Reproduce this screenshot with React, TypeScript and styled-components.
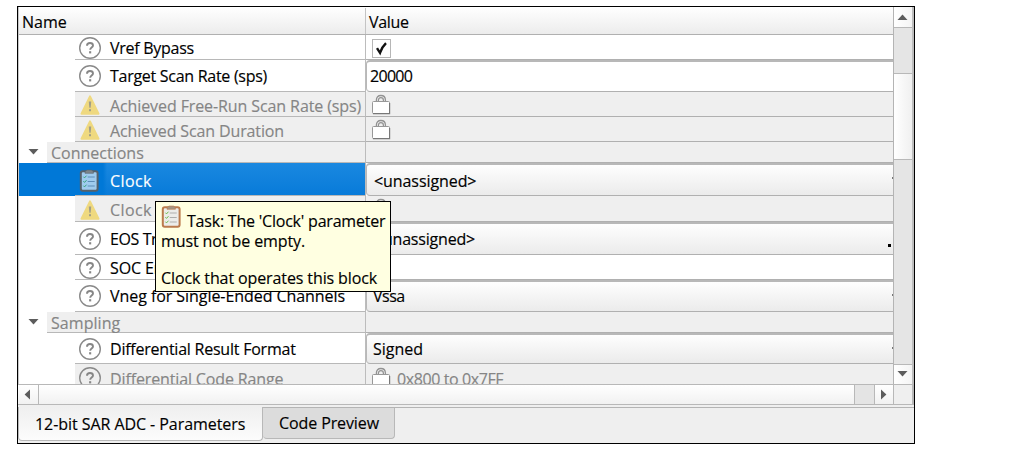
import React from 'react';
import styled, { createGlobalStyle, css } from 'styled-components';

const GlobalStyle = createGlobalStyle`
  * { box-sizing: border-box; }
  body { margin: 0; background: #fff; }
`;

const Page = styled.main`
  padding: 6px 0 0 17px;
  font: 400 16px/20px "Open Sans", "Noto Sans", sans-serif;
  color: #000;
`;

const Window = styled.section`
  position: relative;
  width: 898px;
  height: 438px;
  border: 1px solid #000;
  background: #efefef;
  display: flex;
  flex-direction: column;
  overflow: hidden;
`;

const Text = styled.span<{ $spacing?: number }>`
  white-space: nowrap;
  letter-spacing: ${p => p.$spacing ?? 0}px;
  -webkit-text-stroke: 0.15px currentColor;
`;

const Body = styled.div`
  display: flex;
  height: 377px;
`;

const Table = styled.div`
  flex: 1;
  height: 377px;
  overflow: hidden;
  background: #fff;
  border-left: 1px solid #c8c8c8;
`;

const Header = styled.div`
  display: flex;
  height: 28px;
  padding-top: 1px;
  background: linear-gradient(#fff, #ececec);
  border-bottom: 1px solid #b0b0b0;
`;

const HeadCell = styled.div<{ $first?: boolean }>`
  width: ${p => (p.$first ? '347px' : 'auto')};
  flex: ${p => (p.$first ? 'none' : 1)};
  padding: 4px 0 0 3px;
  border-right: ${p => (p.$first ? '1px solid #c4c4c4' : 'none')};
`;

type Tone = 'normal' | 'locked' | 'selected';

const RowBox = styled.div<{ $h: number }>`
  display: flex;
  height: ${p => p.$h}px;
`;

const Gutter = styled.div<{ $w: number; $tone: Tone }>`
  width: ${p => p.$w}px;
  flex: none;
  display: flex;
  align-items: center;
  padding: 0 0 2px 9px;
  background: ${p => (p.$tone === 'selected' ? '#0078d7' : '#fff')};
`;

const NameCell = styled.div<{ $tone: Tone; $top: number; $group: boolean }>`
  flex: 1;
  display: flex;
  align-items: center;
  padding: ${p => p.$top}px 0 0 ${p => (p.$group ? 4 : 3)}px;
  border-right: 1px solid #bcbcbc;
  border-bottom: 1px solid #b8b8b8;
  background: ${p =>
    p.$tone === 'selected'
      ? 'linear-gradient(90deg, #0078d7 28px, transparent 32px), linear-gradient(#1a88e0, #087bd9)'
      : p.$tone === 'locked' ? '#efefef' : '#fff'};
  color: ${p => (p.$tone === 'selected' ? '#fff' : p.$tone === 'locked' ? '#858585' : '#000')};
`;

const NameSide = styled.div`
  width: 347px;
  flex: none;
  display: flex;
`;

const IconSlot = styled.span<{ $w: number; $raise?: boolean; $inset?: number }>`
  width: ${p => p.$w}px;
  flex: none;
  display: flex;
  padding-left: ${p => p.$inset ?? 0}px;
  padding-bottom: ${p => (p.$raise ? 2 : 0)}px;
`;

const ValueCell = styled.div<{ $kind: 'plain' | 'locked' | 'input' | 'combo'; $pad: number; $top: number }>`
  flex: 1;
  position: relative;
  display: flex;
  align-items: center;
  padding: ${p => p.$top}px 0 0 ${p => p.$pad}px;
  border-bottom: 1px solid #b0b0b0;
  background: ${p => (p.$kind === 'locked' ? '#efefef' : p.$kind === 'combo' ? 'linear-gradient(#fefefe, #ebebeb)' : '#fff')};
  color: ${p => (p.$kind === 'locked' ? '#858585' : '#000')};
  ${p =>
    (p.$kind === 'input' || p.$kind === 'combo') &&
    css`
      border-top: 2px solid #b8b8b8;
      border-left: 1px solid #b8b8b8;
      border-radius: 4px 0 0 4px;
      padding-top: ${Math.max(0, p.$top - 2)}px;
      padding-bottom: ${Math.max(0, 2 - p.$top)}px;
    `}
`;

const ArrowTip = styled.i<{ $dot?: boolean }>`
  position: absolute;
  right: ${p => (p.$dot ? 2 : 0)}px;
  top: ${p => (p.$dot ? 20 : 12)}px;
  width: ${p => (p.$dot ? 3 : 1)}px;
  height: ${p => (p.$dot ? 3 : 2)}px;
  background: ${p => (p.$dot ? '#000' : '#777')};
`;

const CheckBox = styled.span`
  width: 19px;
  height: 19px;
  border: 1px solid #b6b6b6;
  background: #fff;
  display: grid;
  place-items: center;
`;

const ScrollColumn = styled.div`
  width: 21px;
  height: 377px;
  display: flex;
  flex-direction: column;
  border-left: 1px solid #b4b4b4;
  border-right: 2px solid #bdbdbd;
  background: #e5e5e5;
`;

const VButton = styled.div<{ $bottom?: boolean }>`
  height: ${p => (p.$bottom ? 20 : 21)}px;
  display: grid;
  place-items: center;
  padding-right: 1px;
  padding-bottom: ${p => (p.$bottom ? 2 : 0)}px;
  background: linear-gradient(90deg, #fff, #f4f4f4);
  border-top: ${p => (p.$bottom ? '1px solid #b8b8b8' : 'none')};
  border-bottom: ${p => (p.$bottom ? 'none' : '1px solid #b8b8b8')};
`;

const VTrack = styled.div`
  flex: 1;
  padding-top: 45px;
`;

const VThumb = styled.div`
  height: 87px;
  background: linear-gradient(90deg, #fff, #f0f0f0);
  border: solid #b8b8b8;
  border-width: 1px 0;
`;

const HScroll = styled.div`
  height: 21px;
  display: flex;
  border: solid #b8b8b8;
  border-width: 1px 0;
  background: #e4e4e4;
`;

const HPart = styled.div<{ $w?: number; $side?: 'left' | 'right' }>`
  width: ${p => (p.$w ? `${p.$w}px` : 'auto')};
  flex: ${p => (p.$w ? 'none' : 1)};
  display: grid;
  place-items: center;
  background: linear-gradient(#fff, #f1f1f1);
  border-right: ${p => (p.$side === 'right' ? 'none' : '1px solid #b8b8b8')};
  border-left: ${p => (p.$side === 'right' ? '1px solid #b8b8b8' : 'none')};
  padding-right: ${p => (p.$side ? 2 : 0)}px;
`;

const HTrack = styled.div`
  width: 19px;
  background: #e4e4e4;
`;

const Corner = styled.div`
  width: 21px;
  background: #efefef;
  border: solid #b8b8b8;
  border-width: 0 2px 0 1px;
`;

const Tabs = styled.div`
  flex: 1;
  margin-top: 2px;
  border-top: 1px solid #b4b4b4;
  display: flex;
  align-items: flex-start;
`;

const Tab = styled.div<{ $active?: boolean }>`
  width: ${p => (p.$active ? 245 : 132)}px;
  height: ${p => (p.$active ? 34 : 31)}px;
  margin-top: ${p => (p.$active ? '-1px' : 0)};
  padding: ${p => (p.$active ? '7px 0 0 16px' : '5px 0 0 16px')};
  border: 1px solid #b8b8b8;
  border-top: none;
  border-left-width: ${p => (p.$active ? 1 : 0)}px;
  border-radius: 0 0 4px 4px;
  background: ${p => (p.$active ? 'linear-gradient(#efefef, #fcfcfc)' : '#dcdcdc')};
`;

const Tooltip = styled.aside`
  position: absolute;
  left: 137px;
  top: 194px;
  width: 236px;
  height: 91px;
  padding: 4px 0 0 5px;
  border: 1px solid #000;
  background: #ffffe1;
  display: flex;
  flex-direction: column;
`;

const TipLine = styled.div<{ $gap?: number; $first?: boolean }>`
  display: flex;
  align-items: flex-end;
  height: ${p => (p.$first ? 25 : 20)}px;
  margin-top: ${p => p.$gap ?? 0}px;
  gap: 6px;
  & > svg { margin-bottom: 3px; }
`;

const HelpIcon = () => (
  <svg width="24" height="24" viewBox="0 0 24 24" fill="none">
    <circle cx="12" cy="12" r="10.3" stroke="#8a8a8a" strokeWidth="1.4" />
    <path d="M9 9.8C9 7.8 10.1 7 12 7s3 .9 3 2.5c0 2.1-2.8 2.1-2.8 4.3" stroke="#868686" strokeWidth="1.9" />
    <rect x="11.1" y="15.2" width="2.1" height="2.2" fill="#868686" />
  </svg>
);

const WarnIcon = () => (
  <svg width="24" height="22" viewBox="0 0 24 22">
    <path d="M12 2.4 20.5 19.8H3.5Z" fill="#efd980" stroke="#efd980" strokeWidth="2" strokeLinejoin="round" />
    <path d="M10.8 7.5h2.4l-.5 6.3h-1.4z" fill="#a29e88" />
    <rect x="11" y="15.2" width="2" height="2" fill="#a29e88" />
  </svg>
);

const TaskIcon = ({ selected }: { selected?: boolean }) => {
  const frame = selected ? '#56616b' : '#bb7a4d';
  const paper = selected ? '#9fcbee' : '#ececea';
  const lines = selected ? '#5d8db8' : '#adadad';
  const tick = selected ? '#35a277' : '#69bb4b';
  return (
    <svg width="20" height="23" viewBox="0 0 20 23">
      <rect x="1.8" y="2.3" width="16.8" height="19.4" rx="2" fill={paper} stroke={frame} strokeWidth="2" />
      <path d="M6 4.3V2.6L8 1h4.4l2 1.6v1.7z" fill={selected ? '#7c858b' : '#a59483'} stroke={frame} strokeWidth=".6" />
      <path d="M8.7 8h7M8.7 12.5h7M8.7 17h7" stroke={lines} strokeWidth="1.2" />
      <path d="m4.4 7.7 1.1 1.2 2-2.2M4.4 12.2l1.1 1.2 2-2.2M4.4 16.7l1.1 1.2 2-2.2" fill="none" stroke={tick} strokeWidth="1" />
    </svg>
  );
};

const LockIcon = () => (
  <svg width="20" height="22" viewBox="0 0 20 22" fill="none">
    <path d="M5.4 8V6C5.4 3 7 1.5 9.9 1.5S14.4 3 14.4 6v2" stroke="#929292" strokeWidth="1.3" />
    <path d="M7.4 8V6.2c0-1.7.8-2.5 2.5-2.5s2.5.8 2.5 2.5V8" stroke="#929292" strokeWidth="1.2" />
    <rect x="1.5" y="7.5" width="17" height="12" rx="1" fill="#fff" stroke="#989898" />
    <path d="M2 19.7h16.6V9" stroke="#787878" strokeWidth="1.2" />
  </svg>
);

const CheckMark = () => (
  <svg width="15" height="15" viewBox="0 0 15 15" fill="none">
    <path d="M3 7.2 6 11.8Q8 6 12 2.2" stroke="#111" strokeWidth="2.4" />
  </svg>
);

const rotations = { down: 0, left: 90, up: 180, right: 270 };
const Triangle = ({ dir }: { dir: keyof typeof rotations }) => (
  <svg width="11" height="11" viewBox="0 0 11 11">
    <path d="M.5 3h10l-5 5.4z" fill="#5c5c5c" transform={`rotate(${rotations[dir]} 5.5 5.5)`} />
  </svg>
);

type Item = {
  h: number;
  label: string;
  ls?: number;
  icon?: 'help' | 'warn' | 'task';
  tone?: Tone;
  kind?: 'plain' | 'locked' | 'input' | 'combo';
  value?: string;
  vls?: number;
  pad?: number;
  top?: number;
  tip?: 'arrow' | 'dot';
  check?: boolean;
};

const items: Item[] = [
  { h: 25, label: 'Vref Bypass', ls: -0.27, icon: 'help', check: true, pad: 6 },
  { h: 32, label: 'Target Scan Rate (sps)', ls: -0.28, icon: 'help', kind: 'input', value: '20000', vls: -0.7, pad: 3, top: 0 },
  { h: 25, label: 'Achieved Free-Run Scan Rate (sps)', ls: -0.1, icon: 'warn', tone: 'locked', kind: 'locked', pad: 5, top: 4 },
  { h: 25, label: 'Achieved Scan Duration', ls: -0.13, icon: 'warn', tone: 'locked', kind: 'locked', pad: 5, top: 4 },
  { h: 21, label: 'Connections' },
  { h: 33, label: 'Clock', ls: 0.4, icon: 'task', tone: 'selected', kind: 'combo', value: '<unassigned>', vls: -0.08, pad: 7, top: 4, tip: 'arrow' },
  { h: 26, label: 'Clock', ls: 0.4, icon: 'warn', tone: 'locked', kind: 'locked', pad: 5 },
  { h: 33, label: 'EOS Trigger', ls: -0.4, icon: 'help', kind: 'combo', value: '<unassigned>', vls: -0.2, pad: 7, tip: 'dot' },
  { h: 25, label: 'SOC Enable', ls: -0.1, icon: 'help' },
  { h: 32, label: 'Vneg for Single-Ended Channels', ls: -0.06, icon: 'help', kind: 'combo', value: 'Vssa', vls: -0.5, pad: 6, top: 0, tip: 'arrow' },
  { h: 21, label: 'Sampling', ls: 0.05 },
  { h: 31, label: 'Differential Result Format', ls: -0.23, icon: 'help', kind: 'combo', value: 'Signed', pad: 6, tip: 'arrow' },
  { h: 27, label: 'Differential Code Range', ls: -0.13, icon: 'help', tone: 'locked', kind: 'locked', value: '0x800 to 0x7FF', vls: -0.4, pad: 5, top: 4 },
];

function Row({ item }: { item: Item }) {
  const group = !item.icon;
  const tone: Tone = group ? 'locked' : item.tone ?? 'normal';
  const kind = group ? 'locked' : item.kind ?? 'plain';
  const top = item.top ?? 2;
  return (
    <RowBox $h={item.h}>
      <NameSide>
        <Gutter $w={group ? 28 : 56} $tone={tone}>{group && <Triangle dir="down" />}</Gutter>
        <NameCell $tone={tone} $top={top} $group={group}>
          {item.icon && (
            <IconSlot $w={32} $raise={top === 4} $inset={item.icon === 'task' ? 1 : 0}>
              {item.icon === 'help' && <HelpIcon />}
              {item.icon === 'warn' && <WarnIcon />}
              {item.icon === 'task' && <TaskIcon selected />}
            </IconSlot>
          )}
          <Text $spacing={item.ls}>{item.label}</Text>
        </NameCell>
      </NameSide>
      <ValueCell $kind={kind} $pad={item.pad ?? 0} $top={top}>
        {item.check && <CheckBox><CheckMark /></CheckBox>}
        {kind === 'locked' && !group && <IconSlot $w={26} $raise><LockIcon /></IconSlot>}
        {item.value && <Text $spacing={item.vls}>{item.value}</Text>}
        {item.tip && <ArrowTip $dot={item.tip === 'dot'} />}
      </ValueCell>
    </RowBox>
  );
}

export default function App() {
  return (
    <Page>
      <GlobalStyle />
      <Window>
        <Body>
          <Table>
            <Header>
              <HeadCell $first><Text>Name</Text></HeadCell>
              <HeadCell><Text $spacing={-0.3}>Value</Text></HeadCell>
            </Header>
            {items.map((item, i) => <Row key={i} item={item} />)}
          </Table>
          <ScrollColumn>
            <VButton><Triangle dir="up" /></VButton>
            <VTrack><VThumb /></VTrack>
            <VButton $bottom><Triangle dir="down" /></VButton>
          </ScrollColumn>
        </Body>
        <HScroll>
          <HPart $w={21} $side="left"><Triangle dir="left" /></HPart>
          <HPart />
          <HTrack />
          <HPart $w={19} $side="right"><Triangle dir="right" /></HPart>
          <Corner />
        </HScroll>
        <Tabs>
          <Tab $active><Text $spacing={-0.06}>12-bit SAR ADC - Parameters</Text></Tab>
          <Tab><Text $spacing={-0.1}>Code Preview</Text></Tab>
        </Tabs>
        <Tooltip>
          <TipLine $first><TaskIcon /><Text $spacing={-0.21}>Task: The 'Clock' parameter</Text></TipLine>
          <TipLine><Text $spacing={-0.1}>must not be empty.</Text></TipLine>
          <TipLine $gap={17}><Text $spacing={-0.11}>Clock that operates this block</Text></TipLine>
        </Tooltip>
      </Window>
    </Page>
  );
}
